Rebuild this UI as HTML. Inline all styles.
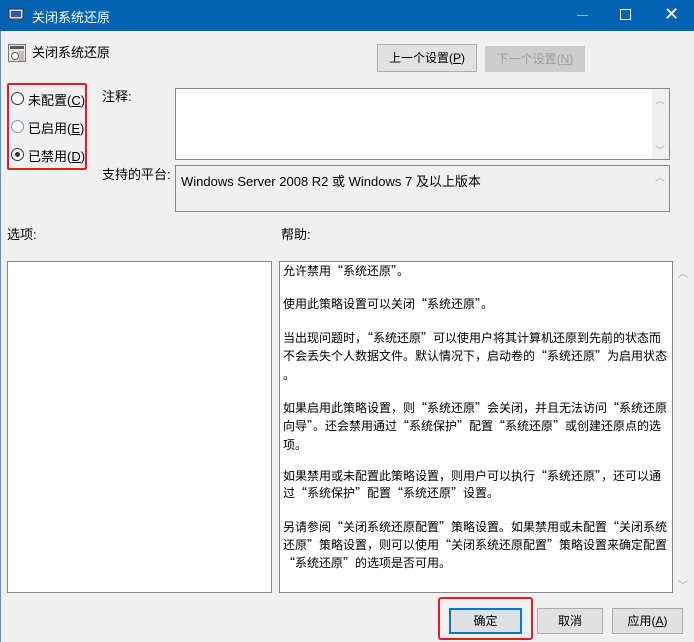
<!DOCTYPE html>
<html><head><meta charset="utf-8"><style>
*{margin:0;padding:0;box-sizing:border-box}
body{width:694px;height:642px;background:#f0f0f0;position:relative;overflow:hidden;font-family:"Liberation Sans","Noto Sans CJK SC",sans-serif;font-size:12px;color:#000}
.a{position:absolute;white-space:nowrap}
.title{left:0;top:0;width:694px;height:31px;background:#0063b1;color:#fff}
.btn{position:absolute;background:#e1e1e1;border:1px solid #adadad;text-align:center;font-size:12px}
.ln{position:absolute;left:283px;white-space:nowrap;letter-spacing:0;line-height:16px;font-family:"Noto Sans CJK SC",sans-serif;font-size:12px}
.radio{position:absolute;width:13px;height:13px;border:1px solid #333;border-radius:50%;background:#fff;left:11px}
</style></head><body>
<div class="a title">
 <svg style="position:absolute;left:8px;top:8px" width="16" height="14"><rect x="1" y="1" width="14" height="10" fill="#dde" stroke="#333"/><rect x="3" y="3" width="10" height="6" fill="#35a"/><rect x="5" y="11" width="6" height="2" fill="#555"/></svg>
 <span class="a" style="left:32px;top:7px;font-size:13px">关闭系统还原</span>
 <div class="a" style="left:577px;top:15px;width:11px;height:1px;background:#8fb5d8"></div>
 <div class="a" style="left:620px;top:9px;width:11px;height:11px;border:1px solid #fff"></div>
 <span class="a" style="left:664px;top:4px;font-size:18px;color:#fff">✕</span>
</div>
<div class="a" style="left:0;top:31px;width:1px;height:611px;background:#5a8fd0"></div>
<svg class="a" style="left:8px;top:44px" width="18" height="18"><rect x="0.5" y="0.5" width="17" height="17" fill="#e8e8e8" stroke="#777"/><rect x="2" y="2" width="14" height="3" fill="#556"/><circle cx="7" cy="12" r="3.5" fill="#fff" stroke="#555"/><rect x="11" y="7" width="5" height="10" fill="#cba"/></svg>
<span class="a" style="left:32px;top:42px;font-size:13px">关闭系统还原</span>
<div class="btn" style="left:377px;top:44px;width:100px;height:28px;line-height:26px">上一个设置(<u>P</u>)</div>
<div class="btn" style="left:485px;top:46px;width:100px;height:26px;line-height:24px;background:#cccccc;border-color:#ccc;color:#a0a0a0">下一个设置(<u>N</u>)</div>
<div class="a" style="left:7px;top:83px;width:80px;height:87px;border:2px solid #e02020;border-radius:2px"></div>
<div class="radio" style="top:92px"></div><span class="a" style="left:28px;top:90px;font-size:13px">未配置(<u>C</u>)</span>
<div class="radio" style="top:120px;border-color:#6b9bd0"></div><span class="a" style="left:28px;top:118px;font-size:13px">已启用(<u>E</u>)</span>
<div class="radio" style="top:148px"><div style="position:absolute;left:3px;top:3px;width:5px;height:5px;border-radius:50%;background:#333"></div></div><span class="a" style="left:28px;top:146px;font-size:13px">已禁用(<u>D</u>)</span>
<span class="a" style="left:102px;top:86px;font-size:13px">注释:</span>
<div class="a" style="left:175px;top:88px;width:495px;height:72px;background:#fff;border:1px solid #828790"><div class="a" style="right:0;top:0;width:17px;height:70px;background:#f0f0f0"></div><span class="a" style="right:4px;top:3px;color:#aaa;font-size:10px">︿</span><span class="a" style="right:4px;bottom:2px;color:#aaa;font-size:10px">﹀</span></div>
<span class="a" style="left:102px;top:164px;font-size:13px">支持的平台:</span>
<div class="a" style="left:175px;top:165px;width:495px;height:47px;background:#f0f0f0;border:1px solid #828790"><span class="a" style="left:5px;top:5px;font-size:13px">Windows Server 2008 R2 或 Windows 7 及以上版本</span><span class="a" style="right:4px;top:3px;color:#aaa;font-size:10px">︿</span></div>
<span class="a" style="left:7px;top:224px;font-size:13px">选项:</span>
<span class="a" style="left:281px;top:224px;font-size:13px">帮助:</span>
<div class="a" style="left:7px;top:261px;width:265px;height:332px;background:#fff;border:1px solid #828790"></div>
<div class="a" style="left:279px;top:261px;width:394px;height:332px;background:#fff;border:1px solid #828790"></div>
<span class="a" style="left:678px;top:265px;color:#aaa;font-size:10px">︿</span>
<span class="a" style="left:678px;top:577px;color:#aaa;font-size:10px">﹀</span>
<div class="ln" style="top:263px">允许禁用“系统还原”。</div>
<div class="ln" style="top:296px">使用此策略设置可以关闭“系统还原”。</div>
<div class="ln" style="top:330px">当出现问题时，“系统还原”可以使用户将其计算机还原到先前的状态而</div>
<div class="ln" style="top:348px">不会丢失个人数据文件。默认情况下，启动卷的“系统还原”为启用状态</div>
<div class="ln" style="top:367px">。</div>
<div class="ln" style="top:400px">如果启用此策略设置，则“系统还原”会关闭，并且无法访问“系统还原</div>
<div class="ln" style="top:418px">向导”。还会禁用通过“系统保护”配置“系统还原”或创建还原点的选</div>
<div class="ln" style="top:437px">项。</div>
<div class="ln" style="top:468px">如果禁用或未配置此策略设置，则用户可以执行“系统还原”，还可以通</div>
<div class="ln" style="top:485px">过“系统保护”配置“系统还原”设置。</div>
<div class="ln" style="top:519px">另请参阅“关闭系统还原配置”策略设置。如果禁用或未配置“关闭系统</div>
<div class="ln" style="top:537px">还原”策略设置，则可以使用“关闭系统还原配置”策略设置来确定配置</div>
<div class="ln" style="top:555px">“系统还原”的选项是否可用。</div>
<div class="a" style="left:438px;top:597px;width:95px;height:43px;border:2px solid #e02020;border-radius:3px"></div>
<div class="btn" style="left:449px;top:608px;width:73px;height:26px;line-height:23px;border:2px solid #0078d7">确定</div>
<div class="btn" style="left:537px;top:608px;width:66px;height:26px;line-height:24px">取消</div>
<div class="btn" style="left:612px;top:608px;width:71px;height:26px;line-height:24px">应用(<u>A</u>)</div>
</body></html>
